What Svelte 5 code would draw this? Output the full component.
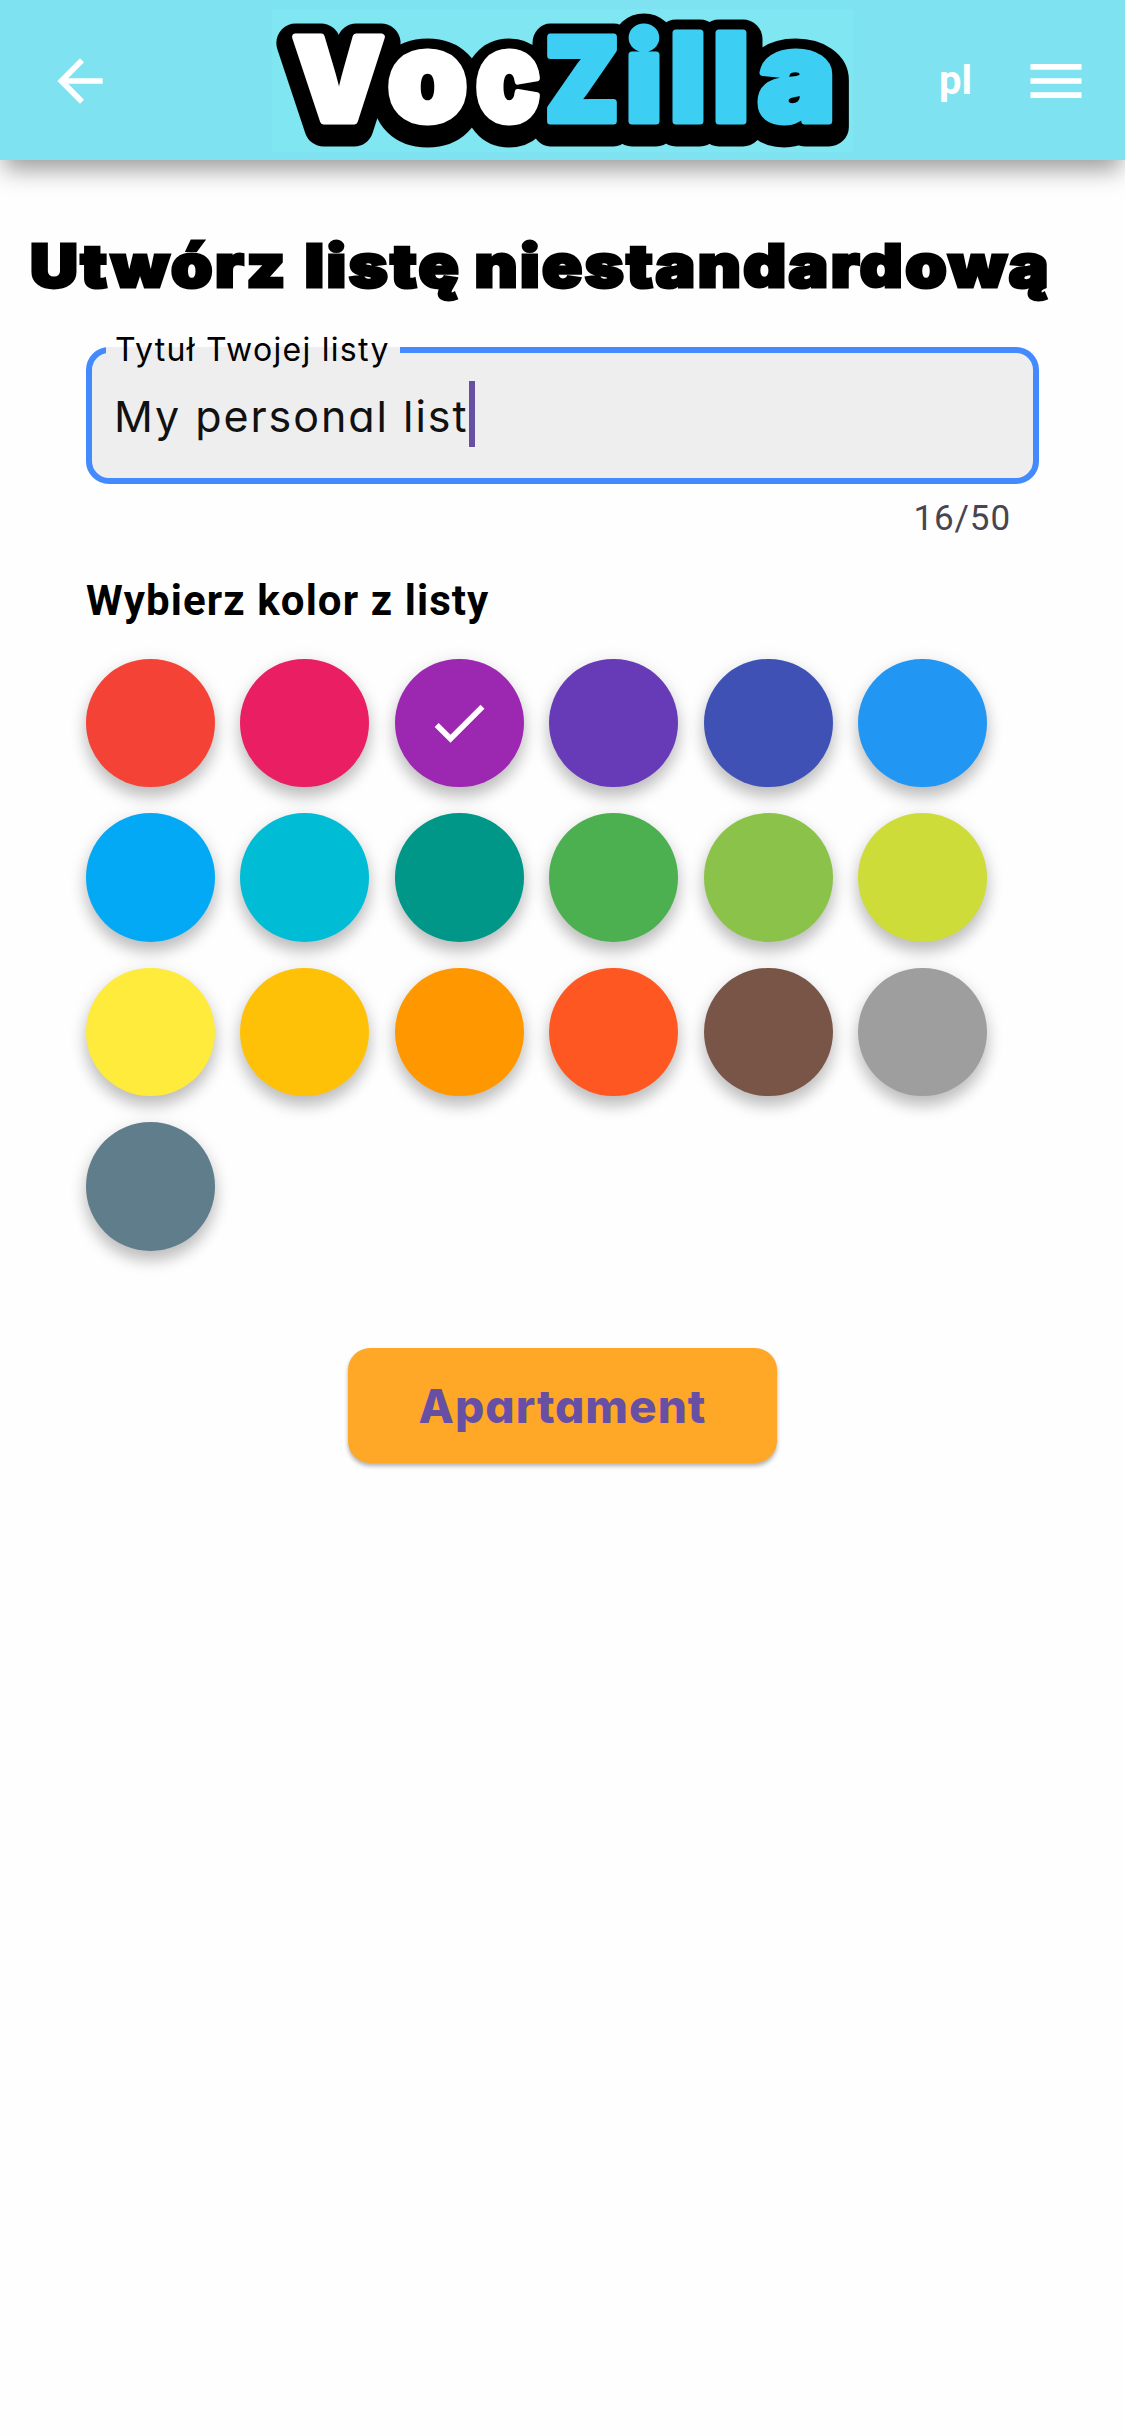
<script>
  // Wordmark letters: left edge, advance width and size of each glyph
  const letters = [
    { ch: 'V', x: 293, w: 91, size: 116, tone: 'light' },
    { ch: 'o', x: 388, w: 79, size: 124, tone: 'light' },
    { ch: 'c', x: 476, w: 64, size: 124, tone: 'light' },
    { ch: 'Z', x: 545, w: 74, size: 116, tone: 'blue' },
    { ch: 'i', x: 626, w: 36, size: 120, tone: 'blue' },
    { ch: 'l', x: 670, w: 36, size: 121, tone: 'blue' },
    { ch: 'l', x: 713, w: 36, size: 121, tone: 'blue' },
    { ch: 'a', x: 758, w: 77, size: 124, tone: 'blue' }
  ];

  const colors = [
    '#f44336', '#e91e63', '#9c27b0', '#673ab7', '#3f51b5', '#2196f3',
    '#03a9f4', '#00bcd4', '#009688', '#4caf50', '#8bc34a', '#cddc39',
    '#ffeb3b', '#ffc107', '#ff9800', '#ff5722', '#795548', '#9e9e9e',
    '#607d8b'
  ];

  let selected = $state(2);
  const title = 'My personal list';
</script>

<div class="page">
  <header>
    <button class="icon back" aria-label="Wstecz">
      <svg viewBox="0 0 24 24"><path d="M20 11H7.83l5.59-5.59L12 4l-8 8 8 8 1.41-1.41L7.83 13H20v-2z" /></svg>
    </button>
    <svg class="logo" viewBox="272 9 581 143">
      <use class="outline" href="#wordmark" y="6" />
      <!-- keeps the counter of the "o" dark -->
      <ellipse cx="427" cy="89" rx="22" ry="28" />
      <g id="wordmark">
        {#each letters as l}
          <text class={l.tone} x={l.x} y="120.5" font-size={l.size} textLength={l.w} lengthAdjust="spacingAndGlyphs">{l.ch}</text>
        {/each}
      </g>
    </svg>
    <span class="lang">pl</span>
    <button class="icon" aria-label="Menu">
      <svg viewBox="0 0 24 24"><path d="M3 18h18v-2H3v2zm0-5h18v-2H3v2zm0-7v2h18V6H3z" /></svg>
    </button>
  </header>

  <h1><span class="w1">Utwórz</span><span class="w2">listę</span><span class="w3">niestandardową</span></h1>

  <main>
    <fieldset>
      <legend>Tytuł Twojej listy</legend>
      <div class="value"><span>{title}</span><i></i></div>
    </fieldset>
    <div class="counter">{title.length}/50</div>

    <h2>Wybierz kolor z listy</h2>
    <div class="swatches">
      {#each colors as color, i}
        <button class="swatch" aria-label={color} style="background: {color}" onclick={() => (selected = i)}>
          {#if i === selected}
            <svg viewBox="0 0 24 24"><path d="M9 16.17 4.83 12l-1.42 1.41L9 19 21 7l-1.41-1.41z" /></svg>
          {/if}
        </button>
      {/each}
    </div>

    <button class="submit">Apartament</button>
  </main>
</div>

<style>
  :global(body) { background: #fefefe; }
  .page { width: 1125px; height: 2436px; overflow: hidden; font-family: Inter, sans-serif; color: #000; }
  button { border: 0; padding: 0; background: none; font: inherit; }

  header {
    box-sizing: border-box; height: 160px; padding: 1px 35px 0 46px;
    display: flex; align-items: center;
    background: #7ee2f0;
    box-shadow: 0 14px 22px -4px rgba(0, 0, 0, .38);
  }
  .icon { width: 68px; height: 68px; }
  .icon svg { display: block; width: 100%; height: 100%; fill: #fff; }
  .logo { width: 581px; height: 143px; margin-left: 158px; background: #80e6f1; }
  .logo text {
    font-family: Inter, sans-serif; font-weight: 900;
    fill: var(--ink, var(--tone)); stroke: var(--ink, var(--tone));
    stroke-width: var(--edge, 7px); stroke-linejoin: round;
  }
  .logo .light { --tone: #fff; }
  .logo .blue { --tone: #3dcff3; }
  .outline { --ink: #000; --edge: 39px; }
  .lang {
    width: 82px; margin-left: 86px; margin-right: 1px;
    font: 700 40px/48px Roboto, sans-serif; color: #fff;
  }

  h1 {
    margin: 68px 0 0 30px; height: 76px; line-height: 76px;
    display: flex; font-size: 59px; font-weight: 900; letter-spacing: 2.2px;
    -webkit-text-stroke: 3px #000; white-space: nowrap;
    transform: scaleX(1.125); transform-origin: left;
  }
  .w1 { width: 244px; }
  .w2 { width: 151px; }

  main { padding: 33px 86px 0; display: flex; flex-direction: column; }
  fieldset {
    box-sizing: border-box; width: 953px; height: 147px; margin: 0; padding: 0 24px;
    border: 6px solid #448aff; border-radius: 23px; background: #eee;
  }
  legend {
    margin-left: -10px; padding: 1px 10px 0 9px; height: 24px; line-height: 24px;
    font-size: 32px; letter-spacing: 1.3px; font-feature-settings: 'cv11'; white-space: nowrap;
  }
  .value { display: flex; align-items: center; gap: 1px; height: 66px; margin-top: 19px; margin-left: -2px; color: #111; }
  .value span { padding-top: 3px; font-size: 43px; letter-spacing: 1.95px; font-feature-settings: 'cv11'; white-space: nowrap; }
  .value i { width: 6px; height: 66px; background: #6750a4; }
  .counter {
    margin-top: 14px; padding-right: 28px; text-align: right;
    font: 400 35px/42px Roboto, sans-serif; letter-spacing: .9px; color: #49454f;
  }
  h2 { margin: 36px 0 0; font: 700 42px/50px Roboto, sans-serif; letter-spacing: 1.1px; }

  .swatches { display: grid; grid-template-columns: repeat(6, 128.6px); gap: 26px 25.9px; margin-top: 32.5px; }
  .swatch {
    width: 128.6px; height: 128.6px; border-radius: 50%;
    display: flex; align-items: center; justify-content: center;
    box-shadow: 0 10px 15px rgba(0, 0, 0, .21), 0 3px 20px rgba(0, 0, 0, .09);
  }
  .swatch svg { width: 68px; height: 68px; fill: #fff; }

  .submit {
    align-self: center; width: 429px; height: 115px; margin-top: 97px; padding-top: 2px;
    border-radius: 22px; background: #ffa726; color: #6750a4;
    font-size: 46px; font-weight: 800; letter-spacing: 1px; font-feature-settings: 'cv11';
    box-shadow: 0 3px 4px rgba(0, 0, 0, .3);
  }
</style>
